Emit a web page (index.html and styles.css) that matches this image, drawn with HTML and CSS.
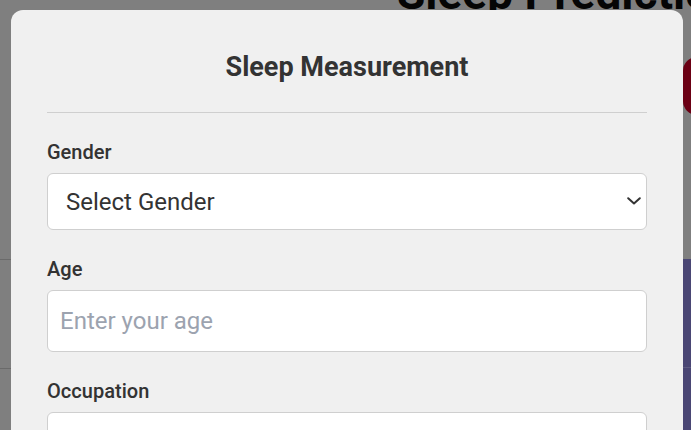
FILE: index.html
```html
<!DOCTYPE html>
<html lang="en">
<head>
<meta charset="utf-8">
<title>Sleep Measurement</title>
<link rel="stylesheet" href="styles.css">
</head>
<body>
<div class="bg-page">
  <h1 class="bg-title">Sleep Prediction</h1>
  <div class="bg-row"><span class="bg-pill"></span></div>
  <div class="bg-cards">
    <div class="bg-left"></div>
    <div class="bg-card"><div class="bg-card-line"></div></div>
  </div>
</div>

<div class="modal">
  <h2 class="modal-title">Sleep Measurement</h2>
  <hr class="divider">
  <form class="form">
    <div class="group">
      <label class="label" for="gender">Gender</label>
      <div class="select-wrap">
        <select id="gender" class="control select">
          <option>Select Gender</option>
          <option>Male</option>
          <option>Female</option>
        </select>
        <svg class="chevron" width="14" height="8" viewBox="0 0 14 8" aria-hidden="true">
          <path d="M1.2 1.2 L7 6.5 L12.8 1.2" fill="none" stroke="#333" stroke-width="2" stroke-linecap="round" stroke-linejoin="round"/>
        </svg>
      </div>
    </div>
    <div class="group">
      <label class="label" for="age">Age</label>
      <input id="age" class="control input" type="text" placeholder="Enter your age">
    </div>
    <div class="group">
      <label class="label" for="occ">Occupation</label>
      <input id="occ" class="control input" type="text">
    </div>
  </form>
</div>
</body>
</html>
```

FILE: styles.css
```css
html, body {
  margin: 0;
  padding: 0;
}
body {
  width: 691px;
  height: 430px;
  overflow: hidden;
  background: #7f7f7f;
  font-family: Roboto, "Liberation Sans", sans-serif;
  position: relative;
}

/* dimmed background page */
.bg-page {
  display: flex;
  flex-direction: column;
}
.bg-title {
  margin: -27px 0 0 0;
  padding-left: 397px;
  font: 700 46px/40px Roboto, sans-serif;
  color: #050505;
  white-space: nowrap;
}
.bg-row {
  display: flex;
  justify-content: flex-end;
  margin-top: 44px;
}
.bg-pill {
  display: block;
  width: 40px;
  height: 58px;
  margin-right: -32px;
  background: #6b0014;
  border-radius: 14px;
}
.bg-cards {
  margin-top: 144px;
  display: flex;
  height: 200px;
}
.bg-left {
  flex: 1;
  height: 108px;
  border-top: 1px solid #6a6a6a;
  border-bottom: 1px solid #6a6a6a;
}
.bg-card {
  width: 8px;
  background: #4a4674;
  padding-top: 108px;
}
.bg-card-line {
  height: 1px;
  background: #5e5b82;
}

/* modal */
.modal {
  position: absolute;
  left: 11px;
  top: 10px;
  width: 600px;
  height: 460px;
  padding: 41px 36px 0;
  background: #f0f0f0;
  border-radius: 12px;
  color: #333;
}
.modal-title {
  margin: 0;
  text-align: center;
  font-size: 27px;
  line-height: 32px;
  font-weight: 700;
  color: #333;
}
.divider {
  margin: 29px 0 0;
  border: 0;
  border-top: 1px solid #cfcfcf;
  height: 0;
}
.form {
  margin-top: 24px;
  display: flex;
  flex-direction: column;
  gap: 24px;
}
.group {
  display: flex;
  flex-direction: column;
  gap: 6px;
}
.label {
  font-family: "Roboto Medium", Roboto, sans-serif;
  font-size: 20px;
  line-height: 30px;
  font-weight: 500;
  color: #333;
}
.control {
  box-sizing: border-box;
  width: 100%;
  margin: 0;
  border: 1px solid #cfcfcf;
  border-radius: 6px;
  background: #fff;
  font-family: Roboto, sans-serif;
  color: #333;
  outline: none;
}
.select-wrap {
  position: relative;
}
.select {
  -webkit-appearance: none;
  appearance: none;
  height: 57px;
  padding: 0 40px 0 18px;
  font-size: 24px;
}
.chevron {
  position: absolute;
  right: 6px;
  top: 24px;
}
.input {
  height: 62px;
  padding: 0 12px;
  font-size: 24px;
}
.input::placeholder {
  color: #9ca3af;
}
```
